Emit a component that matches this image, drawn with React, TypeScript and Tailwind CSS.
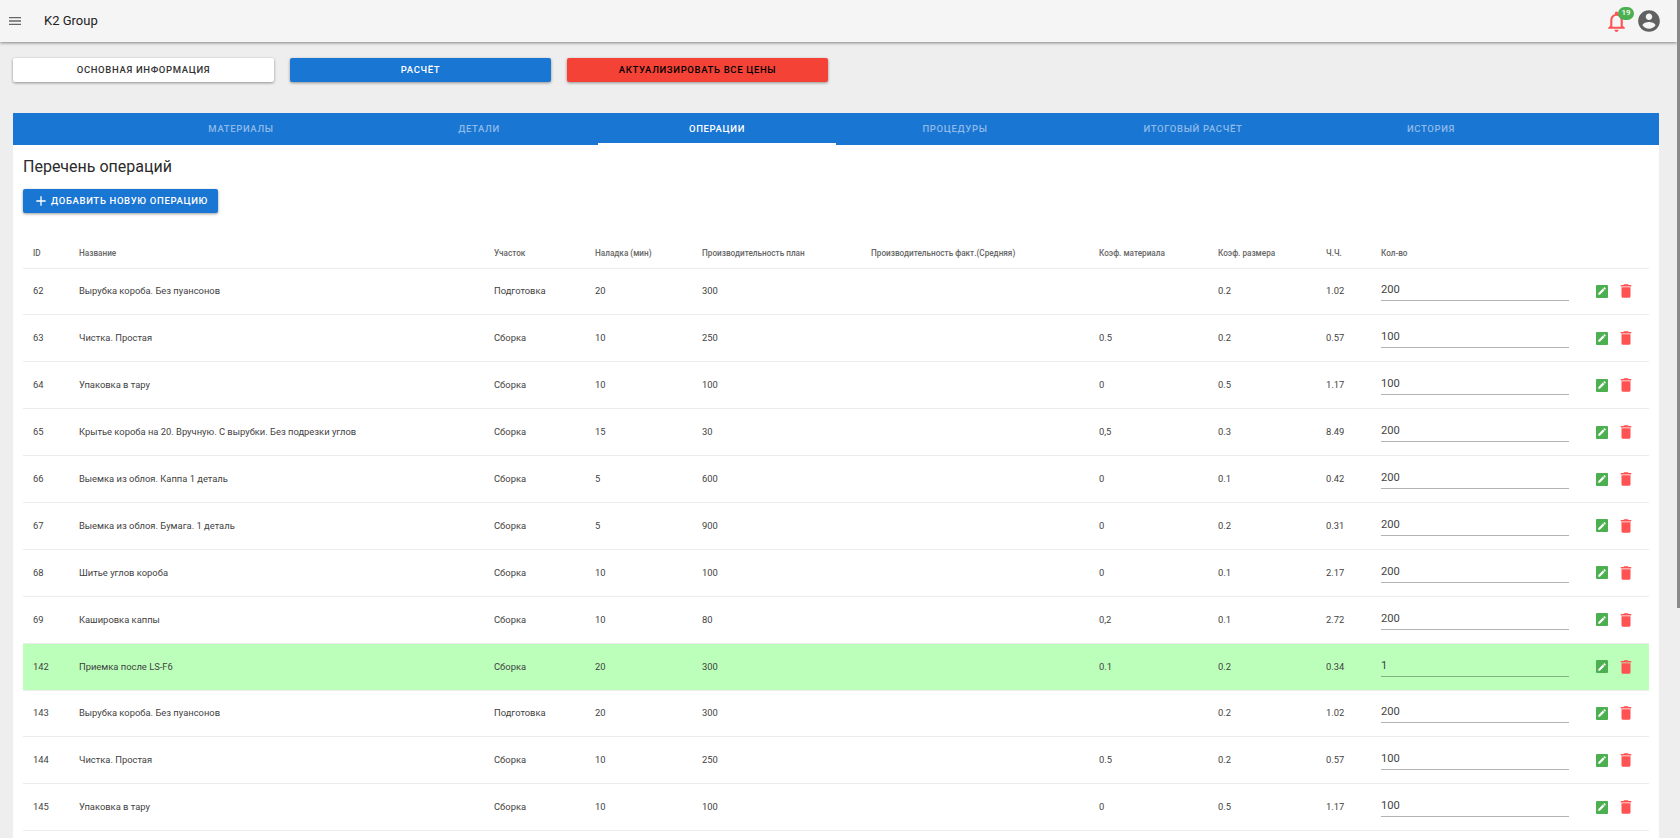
const rows = [
  ["62", "Вырубка короба. Без пуансонов", "Подготовка", "20", "300", "", "0.2", "1.02", "200"],
  ["63", "Чистка. Простая", "Сборка", "10", "250", "0.5", "0.2", "0.57", "100"],
  ["64", "Упаковка в тару", "Сборка", "10", "100", "0", "0.5", "1.17", "100"],
  ["65", "Крытье короба на 20. Вручную. С вырубки. Без подрезки углов", "Сборка", "15", "30", "0,5", "0.3", "8.49", "200"],
  ["66", "Выемка из облоя. Каппа 1 деталь", "Сборка", "5", "600", "0", "0.1", "0.42", "200"],
  ["67", "Выемка из облоя. Бумага. 1 деталь", "Сборка", "5", "900", "0", "0.2", "0.31", "200"],
  ["68", "Шитье углов короба", "Сборка", "10", "100", "0", "0.1", "2.17", "200"],
  ["69", "Кашировка каппы", "Сборка", "10", "80", "0,2", "0.1", "2.72", "200"],
  ["142", "Приемка после LS-F6", "Сборка", "20", "300", "0.1", "0.2", "0.34", "1"],
  ["143", "Вырубка короба. Без пуансонов", "Подготовка", "20", "300", "", "0.2", "1.02", "200"],
  ["144", "Чистка. Простая", "Сборка", "10", "250", "0.5", "0.2", "0.57", "100"],
  ["145", "Упаковка в тару", "Сборка", "10", "100", "0", "0.5", "1.17", "100"],
];

const tabs = ["Материалы", "Детали", "Операции", "Процедуры", "Итоговый расчёт", "История"];

const headers = [
  "ID",
  "Название",
  "Участок",
  "Наладка (мин)",
  "Производительность план",
  "Производительность факт.(Средняя)",
  "Коэф. материала",
  "Коэф. размера",
  "Ч.Ч.",
  "Кол-во",
];

const gridCols = "grid grid-cols-[46px_415px_101px_107px_169px_228px_119px_108px_55px_188px_1fr]";

const EditIcon = () => (
  <span className="flex h-[13px] w-3 items-center justify-center rounded-[1px] bg-[#4caf50]">
    <svg viewBox="0 0 24 24" className="h-[10px] w-[10px] fill-white">
      <path d="M3 17.25V21h3.75L17.81 9.94l-3.75-3.75L3 17.25zM20.71 7.04a1 1 0 0 0 0-1.41l-2.34-2.34a1 1 0 0 0-1.41 0l-1.83 1.83 3.75 3.75 1.83-1.83z" />
    </svg>
  </span>
);

const TrashIcon = () => (
  <svg viewBox="0 0 24 24" className="ml-[9px] h-[18px] w-[18px] fill-[#ff5252]">
    <path d="M6 19c0 1.1.9 2 2 2h8c1.1 0 2-.9 2-2V7H6v12zM19 4h-3.5l-1-1h-5l-1 1H5v2h14V4z" />
  </svg>
);

const Row = ({ r }: { r: string[] }) => (
  <div
    className={`${gridCols} h-[46.9px] shrink-0 items-center border-b border-[#ececec] pl-[10px] text-[9.4px] text-[#3f3f3f] ${
      r[0] === "142" ? "bg-[#bcffba]" : ""
    }`}
  >
    <span>{r[0]}</span>
    <span className="whitespace-nowrap">{r[1]}</span>
    <span>{r[2]}</span>
    <span>{r[3]}</span>
    <span>{r[4]}</span>
    <span />
    <span>{r[5]}</span>
    <span>{r[6]}</span>
    <span>{r[7]}</span>
    <input
      defaultValue={r[8]}
      className="h-5 w-full border-b border-black/30 bg-transparent pb-[2px] text-[11.2px] text-[#444] outline-none"
    />
    <div className="flex items-center pl-[27px]">
      <EditIcon />
      <TrashIcon />
    </div>
  </div>
);

export default function App() {
  return (
    <div className="flex h-[838px] overflow-hidden bg-[#eeeeee] font-['Roboto',sans-serif]">
      <div className="flex min-w-0 flex-1 flex-col">
        <header className="flex h-[42px] shrink-0 items-center bg-[#f5f5f5] pr-[15px] shadow-[0_1px_3px_rgba(0,0,0,0.45)]">
          <svg viewBox="0 0 24 24" className="ml-[7px] h-4 w-4 fill-[#666]">
            <path d="M3 18h18v-2H3v2zm0-5h18v-2H3v2zm0-7v2h18V6H3z" />
          </svg>
          <span className="ml-[21px] text-[13px] text-[#222]">K2 Group</span>
          <div className="relative ml-auto">
            <svg viewBox="0 0 24 24" className="h-[25px] w-[25px] fill-[#ff5252]">
              <path d="M12 22c1.1 0 2-.9 2-2h-4c0 1.1.9 2 2 2zm6-6v-5c0-3.07-1.63-5.64-4.5-6.32V4c0-.83-.67-1.5-1.5-1.5s-1.5.67-1.5 1.5v.68C7.64 5.36 6 7.92 6 11v5l-2 2v1h16v-1l-2-2zm-2 1H8v-6c0-2.48 1.51-4.5 4-4.5s4 2.02 4 4.5v6z" />
            </svg>
            <span className="absolute left-[14px] top-[-2px] flex h-[13px] w-4 items-center justify-center rounded-full bg-[#4caf50] text-[8px] font-medium text-white">
              19
            </span>
          </div>
          <svg viewBox="0 0 24 24" className="ml-[7px] h-[26px] w-[26px] fill-[#616161]">
            <path d="M12 2C6.48 2 2 6.48 2 12s4.48 10 10 10 10-4.48 10-10S17.52 2 12 2zm0 3c1.66 0 3 1.34 3 3s-1.34 3-3 3-3-1.34-3-3 1.34-3 3-3zm0 14.2c-2.5 0-4.71-1.28-6-3.22.03-1.99 4-3.08 6-3.08 1.99 0 5.97 1.09 6 3.08-1.29 1.94-3.5 3.22-6 3.22z" />
          </svg>
        </header>

        <div className="ml-[13px] mt-4 flex shrink-0 gap-4 text-[9.5px] font-medium tracking-[0.65px]">
          <button className="h-6 w-[261px] rounded-[2px] bg-white uppercase text-[#333] shadow-[0_1px_3px_rgba(0,0,0,0.4)]">
            Основная информация
          </button>
          <button className="h-6 w-[261px] rounded-[2px] bg-[#1976d2] uppercase text-white shadow-[0_1px_3px_rgba(0,0,0,0.4)]">
            Расчёт
          </button>
          <button className="h-6 w-[261px] rounded-[2px] bg-[#f44336] uppercase text-black shadow-[0_1px_3px_rgba(0,0,0,0.4)]">
            Актуализировать все цены
          </button>
        </div>

        <div className="ml-[13px] mr-[18px] mt-[31px] flex min-h-0 flex-1 flex-col">
          <nav className="flex h-8 shrink-0 justify-center bg-[#1976d2] text-[9.5px] font-medium uppercase tracking-[0.65px]">
            {tabs.map((t) => (
              <span
                key={t}
                className={`flex w-[238px] items-center justify-center ${
                  t === "Операции" ? "border-b-2 border-white pt-[2px] text-white" : "text-[#8fbaea]"
                }`}
              >
                {t}
              </span>
            ))}
          </nav>

          <section className="flex min-h-0 flex-1 flex-col overflow-hidden bg-white px-[10px]">
            <h2 className="mt-[11px] text-base leading-[22px] text-[#2b2b2b]">Перечень операций</h2>
            <button className="mt-[11px] flex h-6 w-[195px] shrink-0 items-center justify-center gap-[2px] rounded-[2px] bg-[#1976d2] text-[9.5px] font-medium uppercase tracking-[0.66px] text-white shadow-[0_1px_3px_rgba(0,0,0,0.4)]">
              <svg viewBox="0 0 24 24" className="h-4 w-4 fill-white">
                <path d="M19 13h-6v6h-2v-6H5v-2h6V5h2v6h6v2z" />
              </svg>
              Добавить новую операцию
            </button>

            <div
              className={`${gridCols} h-[55.5px] shrink-0 items-center border-b border-[#ececec] pl-[10px] pt-[25px] text-[8.2px] font-medium text-[#666]`}
            >
              {headers.map((h) => (
                <span key={h} className="whitespace-nowrap">
                  {h}
                </span>
              ))}
            </div>

            {rows.map((r) => (
              <Row key={r[0]} r={r} />
            ))}
          </section>
        </div>
      </div>

      <div className="h-[608px] w-[3px] shrink-0 bg-[#8a8a8a]" />
    </div>
  );
}
